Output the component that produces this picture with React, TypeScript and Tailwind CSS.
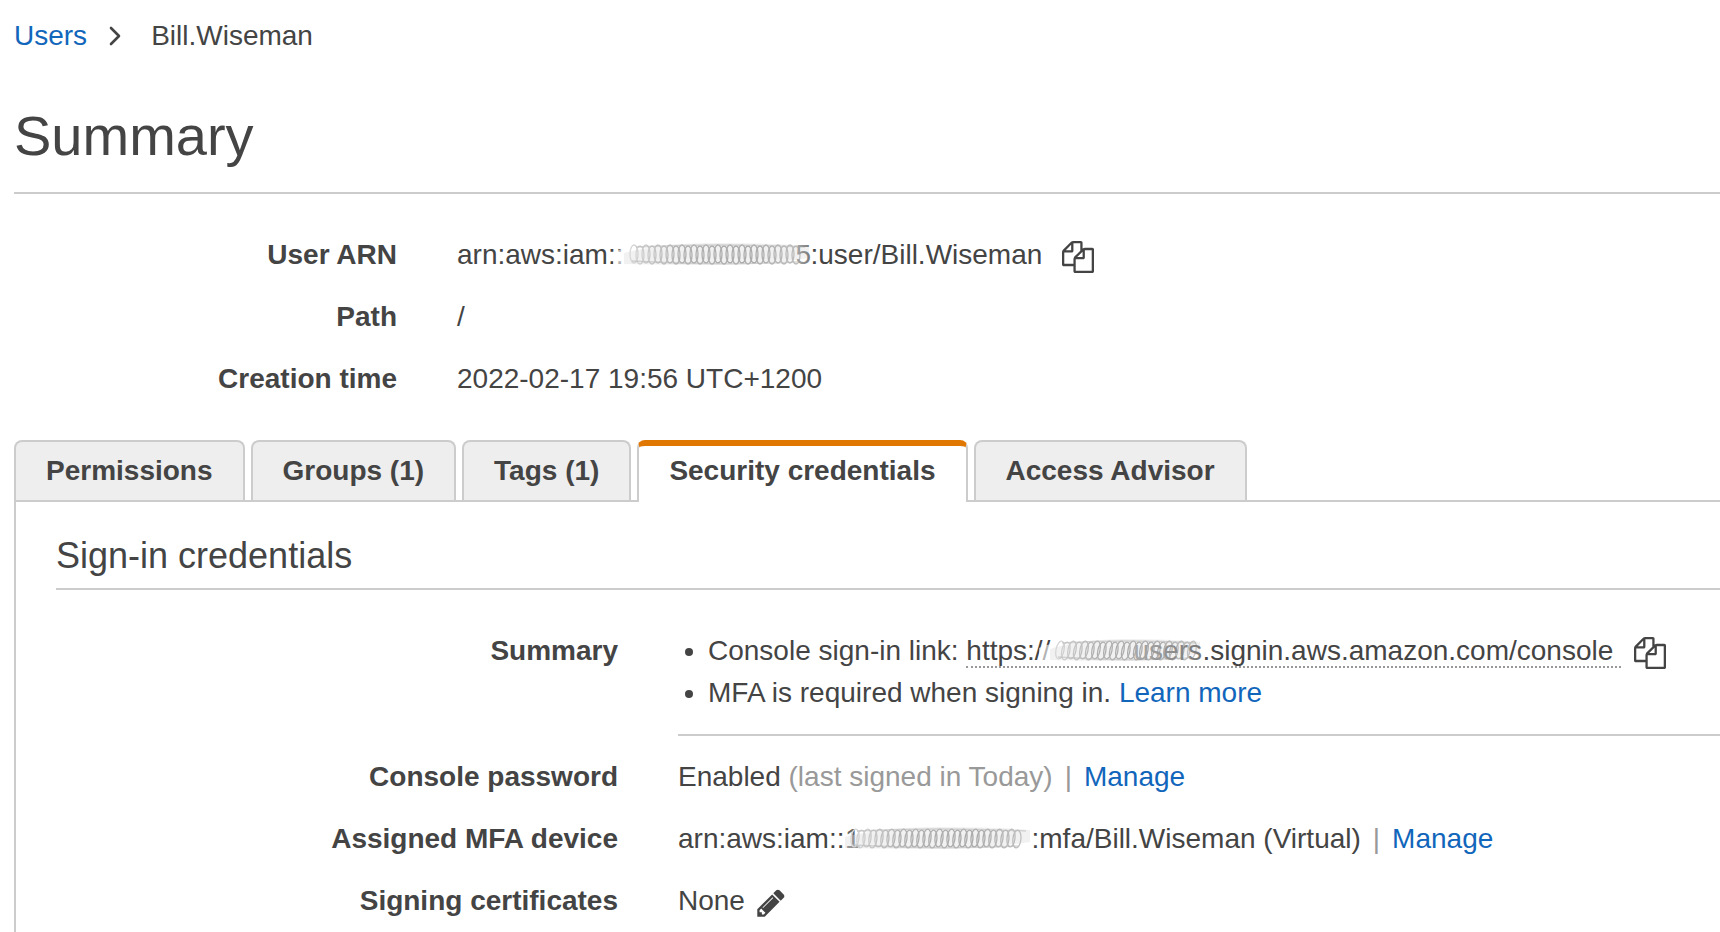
import type { ReactNode } from "react";

const tabs = [
  "Permissions",
  "Groups (1)",
  "Tags (1)",
  "Security credentials",
  "Access Advisor",
];

const activeTab = "Security credentials";

function CopyIcon() {
  return (
    <svg viewBox="0 0 1792 1792" fill="currentColor" className="h-8 w-8">
      <path d="M1696 384q40 0 68 28t28 68v1216q0 40-28 68t-68 28h-960q-40 0-68-28t-28-68v-288h-544q-40 0-68-28t-28-68v-672q0-40 20-88t48-76l408-408q28-28 76-48t88-20h416q40 0 68 28t28 68v328q68-40 128-40h416zm-544 213l-299 299h299v-299zm-640-384l-299 299h299v-299zm196 647l316-316v-416h-384v416q0 40-28 68t-68 28h-416v640h512v-256q0-40 20-88t48-76zm956 804v-1152h-384v416q0 40-28 68t-68 28h-416v640h896z" />
    </svg>
  );
}

function PencilIcon() {
  return (
    <svg viewBox="0 0 1792 1792" fill="currentColor" className="h-8 w-8">
      <path d="M491 1536l91-91-235-235-91 91v107h128v128h107zm523-928q0-22-22-22-10 0-17 7l-542 542q-7 7-7 17 0 22 22 22 10 0 17-7l542-542q7-7 7-17zm-54-192l416 416-832 832h-416v-416zm683 96q0 53-37 90l-166 166-416-416 166-165q36-38 90-38 53 0 91 38l235 234q37 39 37 91z" />
    </svg>
  );
}

type SmudgeProps = {
  id: string;
  width: number;
  slant: number;
  head?: string;
  tail?: string;
};

// Scribbled-over part of an account id or host name
function Smudge({ id, width, slant, head, tail }: SmudgeProps) {
  const rings = Array.from({ length: Math.floor((width - 14) / 6) }, (_, i) => 10 + i * 6);
  return (
    <svg
      width={width}
      height="32"
      viewBox={`0 0 ${width} 32`}
      className="shrink-0 overflow-visible"
    >
      <defs>
        <linearGradient id={`${id}-ink`} gradientUnits="userSpaceOnUse" x1="0" x2={width}>
          <stop offset="0" stopColor="#ddd" />
          <stop offset="0.3" stopColor="#b0b0b0" />
          <stop offset="0.7" stopColor="#aaa" />
          <stop offset="1" stopColor="#c4c4c4" />
        </linearGradient>
        <linearGradient id={`${id}-tail`}>
          <stop offset="0" stopColor="#aaa" />
          <stop offset="1" stopColor="#777" />
        </linearGradient>
        <filter id={`${id}-soft`} x="-10%" y="-30%" width="120%" height="160%">
          <feGaussianBlur stdDeviation="0.7" />
        </filter>
      </defs>
      {head && (
        <text x="0" y="25" fill="#666">
          {head}
        </text>
      )}
      <g filter={`url(#${id}-soft)`} fill="none">
        {!head && (
          <path d="M-11 13Q0 8 14 7V25Q0 28 -11 26Z" fill="#fff" fillOpacity="0.6" />
        )}
        <path
          d={`M0 14Q${width * 0.2} 4 ${width * 0.5} 4T${width - 2} 7V19Q${width * 0.75} 26 ${width * 0.5} 26T0 25Z`}
          fill="#ddd"
          fillOpacity="0.4"
        />
        <g stroke={`url(#${id}-ink)`} strokeWidth="1.3">
          {rings.map((x, i) => (
            <ellipse
              key={x}
              cx={x}
              cy={15 + (i % 2)}
              rx="4"
              ry="9"
              transform={`rotate(${slant} ${x} 15)`}
            />
          ))}
        </g>
        <path
          d={`M12 8Q${width * 0.5} 4 ${width - 6} 8M8 22Q${width * 0.5} 27 ${width - 14} 23`}
          stroke="#bbb"
          strokeOpacity="0.6"
          strokeWidth="1.3"
        />
      </g>
      {tail && (
        <text x={width} y="25" textAnchor="end" fill={`url(#${id}-tail)`}>
          {tail}
        </text>
      )}
    </svg>
  );
}

function Row({ label, wide, children }: { label: string; wide?: boolean; children: ReactNode }) {
  return (
    <div className="flex gap-[60px]">
      <dt className={`shrink-0 text-right font-bold ${wide ? "w-[562px]" : "w-[383px]"}`}>
        {label}
      </dt>
      <dd className="min-w-0 flex-1 whitespace-nowrap">{children}</dd>
    </div>
  );
}

function Link({ children }: { children: ReactNode }) {
  return (
    <a href="#" className="text-[#1166bb]">
      {children}
    </a>
  );
}

function Divider() {
  return <span className="mx-3 text-[#999]">|</span>;
}

export default function App() {
  return (
    <div className="flex min-h-screen flex-col overflow-hidden bg-white pt-[15px] pl-[14px] font-['Liberation_Sans',Arial,sans-serif] text-[28px] leading-[42px] text-[#444]">
      <nav className="flex items-center">
        <Link>Users</Link>
        <svg viewBox="0 0 12 20" className="mx-[22px] h-5 w-3" fill="none">
          <path
            d="M2 2l8 8-8 8"
            stroke="currentColor"
            strokeWidth="2.6"
            strokeLinecap="round"
            strokeLinejoin="round"
          />
        </svg>
        <span className="ml-2">Bill.Wiseman</span>
      </nav>

      <h1 className="mt-[47px] border-b-2 border-[#ccc] pb-6 text-[56px] leading-[64px]">
        Summary
      </h1>

      <dl className="mt-10 flex flex-col gap-5">
        <Row label="User ARN">
          <span className="flex items-center">
            arn:aws:iam::
            <Smudge id="user-arn" width={187} slant={0} tail="5" />
            :user/Bill.Wiseman
            <button type="button" aria-label="Copy user ARN" className="ml-5 pt-1">
              <CopyIcon />
            </button>
          </span>
        </Row>
        <Row label="Path">/</Row>
        <Row label="Creation time">2022-02-17 19:56 UTC+1200</Row>
      </dl>

      <div role="tablist" className="mt-10 flex gap-[6px]">
        {tabs.map((tab) => (
          <button
            key={tab}
            type="button"
            role="tab"
            aria-selected={tab === activeTab}
            className={
              tab === activeTab
                ? "relative -mb-[2px] rounded-t-lg border-x-2 border-t-6 border-x-[#ccc] border-t-[#e07700] bg-white px-[30px] pt-1 pb-[10px] font-bold"
                : "rounded-t-lg border-x-2 border-t-2 border-[#ccc] bg-[#eee] px-[30px] py-2 font-bold"
            }
          >
            {tab}
          </button>
        ))}
      </div>

      <section className="flex-1 border-t-2 border-l-2 border-[#ccc] pt-[33px] pl-10">
        <h2 className="border-b-2 border-[#ccc] pb-[11px] text-[36px] leading-[42px]">
          Sign-in credentials
        </h2>
        <dl className="mt-10 flex flex-col gap-5">
          <Row label="Summary" wide>
            <ul className="list-disc border-b-2 border-[#ccc] pb-5 pl-[30px]">
              <li>
                <span className="flex items-center">
                  <span className="whitespace-pre">Console sign-in link: </span>
                  <span className="flex h-[34px] items-center border-b-2 border-dotted border-[#999] pt-[2px] pr-2">
                    https://
                    <Smudge id="signin-link" width={152} slant={12} tail="users" />
                    .signin.aws.amazon.com/console
                  </span>
                  <button type="button" aria-label="Copy sign-in link" className="ml-[13px] pt-1">
                    <CopyIcon />
                  </button>
                </span>
              </li>
              <li>
                MFA is required when signing in. <Link>Learn more</Link>
              </li>
            </ul>
          </Row>
          <Row label="Console password" wide>
            Enabled <span className="text-[#999]">(last signed in Today)</span>
            <Divider />
            <Link>Manage</Link>
          </Row>
          <Row label="Assigned MFA device" wide>
            <span className="flex items-center">
              arn:aws:iam::
              <Smudge id="mfa-arn" width={187} slant={6} head="1" />
              :mfa/Bill.Wiseman (Virtual)
              <Divider />
              <Link>Manage</Link>
            </span>
          </Row>
          <Row label="Signing certificates" wide>
            <span className="flex items-center">
              None
              <button
                type="button"
                aria-label="Edit signing certificates"
                className="ml-[10px] pt-1"
              >
                <PencilIcon />
              </button>
            </span>
          </Row>
        </dl>
      </section>
    </div>
  );
}
